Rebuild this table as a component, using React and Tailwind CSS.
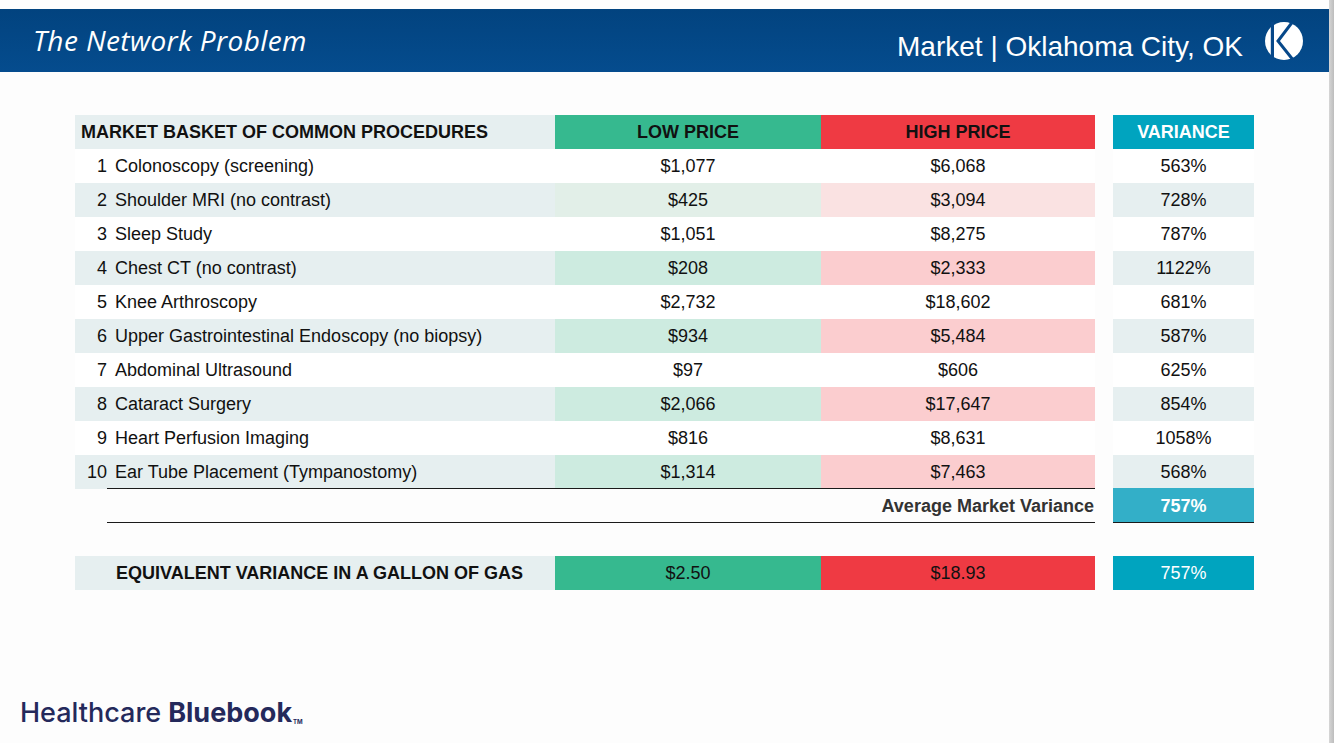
import React from "react";

const rows = [
  ["1", "Colonoscopy (screening)", "$1,077", "$6,068", "563%"],
  ["2", "Shoulder MRI (no contrast)", "$425", "$3,094", "728%"],
  ["3", "Sleep Study", "$1,051", "$8,275", "787%"],
  ["4", "Chest CT (no contrast)", "$208", "$2,333", "1122%"],
  ["5", "Knee Arthroscopy", "$2,732", "$18,602", "681%"],
  ["6", "Upper Gastrointestinal Endoscopy (no biopsy)", "$934", "$5,484", "587%"],
  ["7", "Abdominal Ultrasound", "$97", "$606", "625%"],
  ["8", "Cataract Surgery", "$2,066", "$17,647", "854%"],
  ["9", "Heart Perfusion Imaging", "$816", "$8,631", "1058%"],
  ["10", "Ear Tube Placement (Tympanostomy)", "$1,314", "$7,463", "568%"],
];

function KLogo() {
  return (
    <svg width="38" height="38" viewBox="0 0 38 38">
      <circle cx="19" cy="19" r="19" fill="#ffffff" />
      <rect x="5.8" y="0" width="3.2" height="38" fill="#06488a" />
      <polyline
        points="27,0.5 13,19 28.5,38.5"
        fill="none"
        stroke="#06488a"
        strokeWidth="3"
      />
    </svg>
  );
}

function Row({ r, i }) {
  const even = i % 2 === 1;
  const labelBg = even ? "bg-[#e6eff0]" : "bg-white";
  let lowBg = "bg-white";
  let highBg = "bg-white";
  if (even) {
    if (i === 1) {
      lowBg = "bg-[#e2efe8]";
      highBg = "bg-[#fae2e2]";
    } else {
      lowBg = "bg-[#cdebe0]";
      highBg = "bg-[#fbcdcf]";
    }
  }
  return (
    <div className="flex h-[34px] items-center">
      <div className={`flex h-full w-[480px] items-center ${labelBg}`}>
        <span className="w-[32px] text-right">{r[0]}</span>
        <span className="pl-[8px]">{r[1]}</span>
      </div>
      <div className={`flex h-full w-[266px] items-center justify-center ${lowBg}`}>{r[2]}</div>
      <div className={`flex h-full w-[274px] items-center justify-center ${highBg}`}>{r[3]}</div>
      <div className="w-[18px]" />
      <div className={`flex h-full w-[141px] items-center justify-center ${even ? "bg-[#e6eff0]" : "bg-white"}`}>{r[4]}</div>
    </div>
  );
}

export default function App() {
  return (
    <div className="flex h-[743px] w-[1334px] overflow-hidden bg-[#fdfdfd]">
      <div className="flex w-[1329px] flex-col pt-[9px]">
        <div className="flex h-[63px] items-center justify-between bg-gradient-to-b from-[#02437f] to-[#054c8e] pl-[33px] pr-[26px]">
          <div className="mb-[2px] font-['Open_Sans',sans-serif] text-[28px] italic leading-none tracking-[0.4px] text-white">
            The Network Problem
          </div>
          <div className="flex items-center">
            <div className="mt-[12px] font-['Liberation_Sans',Arial,sans-serif] text-[28px] leading-none text-white">
              Market | Oklahoma City, OK
            </div>
            <div className="ml-[22px]">
              <KLogo />
            </div>
          </div>
        </div>

        <div className="ml-[75px] mt-[43px] font-['Liberation_Sans',Arial,sans-serif] text-[18px] leading-none text-[#111]">
          <div className="flex h-[34px] items-center font-bold">
            <div className="flex h-full w-[480px] items-center bg-[#e6eff0] pl-[6px]">
              MARKET BASKET OF COMMON PROCEDURES
            </div>
            <div className="flex h-full w-[266px] items-center justify-center bg-[#36b98f]">LOW PRICE</div>
            <div className="flex h-full w-[274px] items-center justify-center bg-[#ef3a43]">HIGH PRICE</div>
            <div className="w-[18px]" />
            <div className="flex h-full w-[141px] items-center justify-center bg-[#00a4bf] text-white">VARIANCE</div>
          </div>

          {rows.map((r, i) => (
            <Row key={r[0]} r={r} i={i} />
          ))}

          <div className="-mt-px flex h-[35px] items-stretch">
            <div className="w-[32px]" />
            <div className="flex w-[988px] items-center justify-end border-y border-[#1a1a1a] pr-[1px] font-bold text-[#333]">
              Average Market Variance
            </div>
            <div className="w-[18px]" />
            <div className="flex w-[141px] items-center justify-center border-b border-[#1a1a1a] bg-[#33afc8] pt-px font-bold text-white">
              757%
            </div>
          </div>

          <div className="mt-[33px] flex h-[34px] items-center">
            <div className="flex h-full w-[480px] items-center bg-[#e6eff0] pl-[41px] font-bold">
              EQUIVALENT VARIANCE IN A GALLON OF GAS
            </div>
            <div className="flex h-full w-[266px] items-center justify-center bg-[#36b98f]">$2.50</div>
            <div className="flex h-full w-[274px] items-center justify-center bg-[#ef3a43]">$18.93</div>
            <div className="w-[18px]" />
            <div className="flex h-full w-[141px] items-center justify-center bg-[#00a4bf] text-white">757%</div>
          </div>
        </div>

        <div className="mt-auto flex items-end pb-[17px] pl-[20px] font-['Inter',sans-serif] text-[27px] leading-none text-[#24295b]">
          <span className="font-medium">Healthcare</span>
          <span className="ml-[7px] font-bold">Bluebook</span>
          <span className="mb-[1px] ml-[1px] text-[6px] font-bold">TM</span>
        </div>
      </div>
      <div className="w-[5px] bg-gradient-to-r from-[#d6d6d6] to-[#bdbdbd]" />
    </div>
  );
}
